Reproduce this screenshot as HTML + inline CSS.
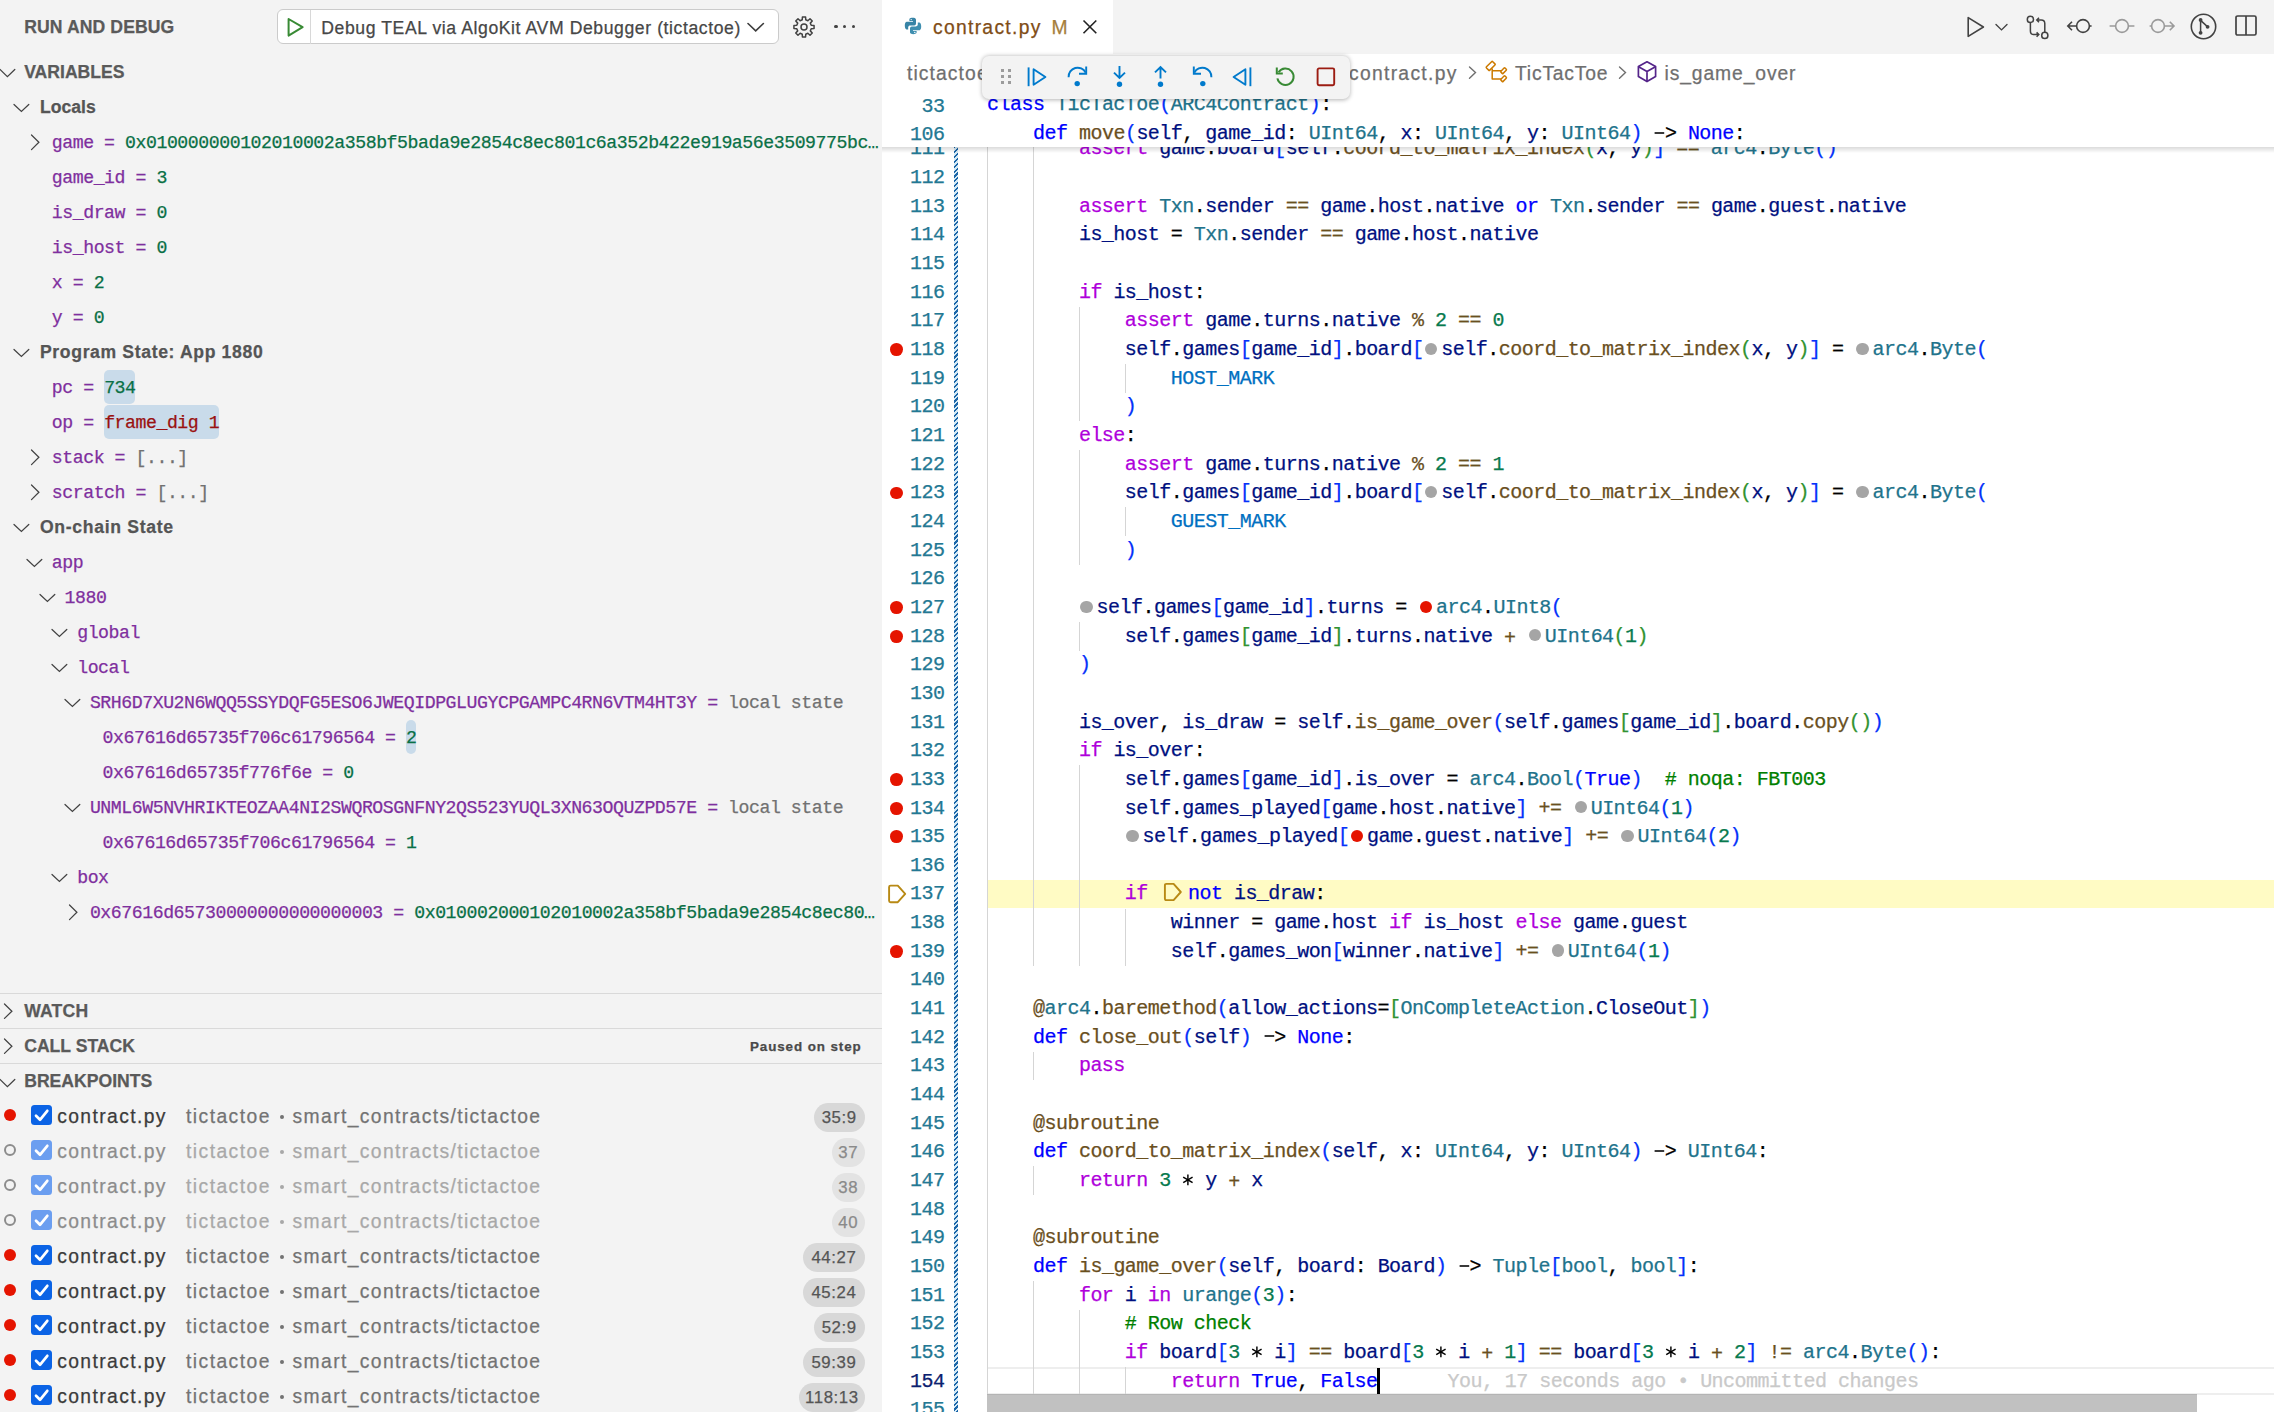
<!DOCTYPE html>
<html><head><meta charset="utf-8"><title>VS Code debug</title>
<style>
*{box-sizing:border-box}
html,body{margin:0;padding:0}
body{width:2274px;height:1412px;overflow:hidden;position:relative;background:#fff;font-family:'Liberation Sans',sans-serif}
.a{position:absolute}
.t{position:absolute;white-space:pre;line-height:30px;height:30px;-webkit-text-stroke:0.25px currentColor}
.kw{color:#AF00DB}.st{color:#0000FF}.fn{color:#6a4f1e}.v{color:#001080}.cl{color:#21738b}.nu{color:#087a4e}
.co{color:#0070C1}.cm{color:#008000}.op{color:#6a4f1e}.pl{color:#000}.b0{color:#0431FA}.b1{color:#319331}.b2{color:#7B3814}
.idot{display:inline-block;width:17.7px;height:1px;position:relative;letter-spacing:0}
.idot::after{content:"";position:absolute;left:1.6px;top:-11.4px;width:12.2px;height:12.2px;border-radius:50%;background:#a5a5a5}
.idot.r::after{background:#e51400}
.star{display:inline-block;width:11.486px;height:1px;position:relative}
.iarr{display:inline-block;width:28.6px;height:1px;position:relative}
</style></head>
<body>
<div class="a" style="left:0;top:0;width:882px;height:1412px;background:#f3f3f3"></div>
<div class="t" style="left:24.20px;top:11.90px;font:bold 17.6px 'Liberation Sans';line-height:30px;color:#5a5a5a;letter-spacing:0.1px">RUN AND DEBUG</div>
<div class="a" style="left:277px;top:8.7px;width:502px;height:35.8px;border:1.7px solid #cbcbcb;border-radius:6px;background:#fff"></div>
<div class="a" style="left:310px;top:9.5px;width:1.4px;height:34.2px;background:#d8d8d8"></div>
<svg class="a" style="left:286px;top:17px;" width="19" height="21" viewBox="0 0 19 21"><path d="M2.6,2 L16.6,10.2 L2.6,18.6 Z" fill="none" stroke="#388a34" stroke-width="2" stroke-linejoin="round"/></svg>
<div class="t" style="left:321.30px;top:12.90px;font:17.6px 'Liberation Sans';line-height:30px;color:#474747;letter-spacing:0.59px">Debug TEAL via AlgoKit AVM Debugger (tictactoe)</div>
<svg class="a" style="left:746px;top:20.9px;" width="19.4" height="12.2" viewBox="0 0 19.4 12.2"><polyline points="2,2.5 9.7,9.899999999999999 17.4,2.5" fill="none" stroke="#3c3c3c" stroke-width="1.6" stroke-linecap="round"/></svg>
<svg class="a" style="left:793px;top:15.5px;" width="22" height="22" viewBox="0 0 22 22"><polygon points="9.40,0.93 12.60,0.93 12.73,3.80 14.87,4.69 17.00,2.75 19.25,5.00 17.31,7.13 18.20,9.27 21.07,9.40 21.07,12.60 18.20,12.73 17.31,14.87 19.25,17.00 17.00,19.25 14.87,17.31 12.73,18.20 12.60,21.07 9.40,21.07 9.27,18.20 7.13,17.31 5.00,19.25 2.75,17.00 4.69,14.87 3.80,12.73 0.93,12.60 0.93,9.40 3.80,9.27 4.69,7.13 2.75,5.00 5.00,2.75 7.13,4.69 9.27,3.80" fill="none" stroke="#424242" stroke-width="1.5" stroke-linejoin="round"/><circle cx="11" cy="11" r="3" fill="none" stroke="#424242" stroke-width="1.5"/></svg>
<div class="a" style="left:834.35px;top:24.8px;width:3.3px;height:3.3px;border-radius:50%;background:#424242"></div>
<div class="a" style="left:843.15px;top:24.8px;width:3.3px;height:3.3px;border-radius:50%;background:#424242"></div>
<div class="a" style="left:851.95px;top:24.8px;width:3.3px;height:3.3px;border-radius:50%;background:#424242"></div>
<svg class="a" style="left:-1.8px;top:66.6px;" width="18.8" height="12.0" viewBox="0 0 18.8 12.0"><polyline points="2,2.5 9.4,9.7 16.8,2.5" fill="none" stroke="#424242" stroke-width="1.25" stroke-linecap="round"/></svg>
<div class="t" style="left:24.20px;top:57.35px;font:bold 17.6px 'Liberation Sans';line-height:30px;color:#5a5a5a;">VARIABLES</div>
<svg class="a" style="left:12.100000000000001px;top:101.75px;" width="18.8" height="11.8" viewBox="0 0 18.8 11.8"><polyline points="2,2.5 9.4,9.5 16.8,2.5" fill="none" stroke="#424242" stroke-width="1.25" stroke-linecap="round"/></svg>
<div class="t" style="left:40.00px;top:92.35px;font:bold 17.6px 'Liberation Sans';line-height:30px;color:#555555;letter-spacing:0.0px">Locals</div>
<svg class="a" style="left:28.799999999999997px;top:132.95px;" width="12.2" height="18.6" viewBox="0 0 12.2 18.6"><polyline points="2.5,2 9.899999999999999,9.3 2.5,16.6" fill="none" stroke="#424242" stroke-width="1.25" stroke-linecap="round"/></svg>
<div class="t" style="left:51.80px;top:128.35px;font:18.2px 'Liberation Mono';line-height:30px;color:#7f2f9e;letter-spacing:-0.452px"><span style="color:#7f2f9e">game</span><span style="color:#7f2f9e"> = </span><span style="color:#0a7046">0x010000000102010002a358bf5bada9e2854c8ec801c6a352b422e919a56e3509775bc…</span></div>
<div class="t" style="left:51.80px;top:163.35px;font:18.2px 'Liberation Mono';line-height:30px;color:#7f2f9e;letter-spacing:-0.452px"><span style="color:#7f2f9e">game_id</span><span style="color:#7f2f9e"> = </span><span style="color:#0a7046">3</span></div>
<div class="t" style="left:51.80px;top:198.35px;font:18.2px 'Liberation Mono';line-height:30px;color:#7f2f9e;letter-spacing:-0.452px"><span style="color:#7f2f9e">is_draw</span><span style="color:#7f2f9e"> = </span><span style="color:#0a7046">0</span></div>
<div class="t" style="left:51.80px;top:233.35px;font:18.2px 'Liberation Mono';line-height:30px;color:#7f2f9e;letter-spacing:-0.452px"><span style="color:#7f2f9e">is_host</span><span style="color:#7f2f9e"> = </span><span style="color:#0a7046">0</span></div>
<div class="t" style="left:51.80px;top:268.35px;font:18.2px 'Liberation Mono';line-height:30px;color:#7f2f9e;letter-spacing:-0.452px"><span style="color:#7f2f9e">x</span><span style="color:#7f2f9e"> = </span><span style="color:#0a7046">2</span></div>
<div class="t" style="left:51.80px;top:303.35px;font:18.2px 'Liberation Mono';line-height:30px;color:#7f2f9e;letter-spacing:-0.452px"><span style="color:#7f2f9e">y</span><span style="color:#7f2f9e"> = </span><span style="color:#0a7046">0</span></div>
<svg class="a" style="left:12.100000000000001px;top:346.75px;" width="18.8" height="11.8" viewBox="0 0 18.8 11.8"><polyline points="2,2.5 9.4,9.5 16.8,2.5" fill="none" stroke="#424242" stroke-width="1.25" stroke-linecap="round"/></svg>
<div class="t" style="left:40.00px;top:337.35px;font:bold 17.6px 'Liberation Sans';line-height:30px;color:#555555;letter-spacing:0.64px">Program State: App 1880</div>
<div class="a" style="left:104.15px;top:370.35px;width:30.61px;height:34px;border-radius:5px;background:#c9dbea"></div>
<div class="t" style="left:51.80px;top:373.35px;font:18.2px 'Liberation Mono';line-height:30px;color:#7f2f9e;letter-spacing:-0.452px"><span style="color:#7f2f9e">pc</span><span style="color:#7f2f9e"> = </span><span style="color:#0a7046">734</span></div>
<div class="a" style="left:104.15px;top:405.35px;width:114.37px;height:34px;border-radius:5px;background:#c9dbea"></div>
<div class="t" style="left:51.80px;top:408.35px;font:18.2px 'Liberation Mono';line-height:30px;color:#7f2f9e;letter-spacing:-0.452px"><span style="color:#7f2f9e">op</span><span style="color:#7f2f9e"> = </span><span style="color:#9a1111">frame_dig 1</span></div>
<svg class="a" style="left:28.799999999999997px;top:447.95000000000005px;" width="12.2" height="18.6" viewBox="0 0 12.2 18.6"><polyline points="2.5,2 9.899999999999999,9.3 2.5,16.6" fill="none" stroke="#424242" stroke-width="1.25" stroke-linecap="round"/></svg>
<div class="t" style="left:51.80px;top:443.35px;font:18.2px 'Liberation Mono';line-height:30px;color:#7f2f9e;letter-spacing:-0.452px"><span style="color:#7f2f9e">stack</span><span style="color:#7f2f9e"> = </span><span style="color:#717171">[...]</span></div>
<svg class="a" style="left:28.799999999999997px;top:482.95000000000005px;" width="12.2" height="18.6" viewBox="0 0 12.2 18.6"><polyline points="2.5,2 9.899999999999999,9.3 2.5,16.6" fill="none" stroke="#424242" stroke-width="1.25" stroke-linecap="round"/></svg>
<div class="t" style="left:51.80px;top:478.35px;font:18.2px 'Liberation Mono';line-height:30px;color:#7f2f9e;letter-spacing:-0.452px"><span style="color:#7f2f9e">scratch</span><span style="color:#7f2f9e"> = </span><span style="color:#717171">[...]</span></div>
<svg class="a" style="left:12.100000000000001px;top:521.75px;" width="18.8" height="11.8" viewBox="0 0 18.8 11.8"><polyline points="2,2.5 9.4,9.5 16.8,2.5" fill="none" stroke="#424242" stroke-width="1.25" stroke-linecap="round"/></svg>
<div class="t" style="left:40.00px;top:512.35px;font:bold 17.6px 'Liberation Sans';line-height:30px;color:#555555;letter-spacing:0.68px">On-chain State</div>
<svg class="a" style="left:24.799999999999997px;top:556.75px;" width="18.8" height="11.8" viewBox="0 0 18.8 11.8"><polyline points="2,2.5 9.4,9.5 16.8,2.5" fill="none" stroke="#424242" stroke-width="1.25" stroke-linecap="round"/></svg>
<div class="t" style="left:51.80px;top:548.35px;font:18.2px 'Liberation Mono';line-height:30px;color:#7f2f9e;letter-spacing:-0.452px"><span style="color:#7f2f9e">app</span></div>
<svg class="a" style="left:37.49999999999999px;top:591.75px;" width="18.8" height="11.8" viewBox="0 0 18.8 11.8"><polyline points="2,2.5 9.4,9.5 16.8,2.5" fill="none" stroke="#424242" stroke-width="1.25" stroke-linecap="round"/></svg>
<div class="t" style="left:64.50px;top:583.35px;font:18.2px 'Liberation Mono';line-height:30px;color:#7f2f9e;letter-spacing:-0.452px"><span style="color:#7f2f9e">1880</span></div>
<svg class="a" style="left:50.199999999999996px;top:626.75px;" width="18.8" height="11.8" viewBox="0 0 18.8 11.8"><polyline points="2,2.5 9.4,9.5 16.8,2.5" fill="none" stroke="#424242" stroke-width="1.25" stroke-linecap="round"/></svg>
<div class="t" style="left:77.20px;top:618.35px;font:18.2px 'Liberation Mono';line-height:30px;color:#7f2f9e;letter-spacing:-0.452px"><span style="color:#7f2f9e">global</span></div>
<svg class="a" style="left:50.199999999999996px;top:661.75px;" width="18.8" height="11.8" viewBox="0 0 18.8 11.8"><polyline points="2,2.5 9.4,9.5 16.8,2.5" fill="none" stroke="#424242" stroke-width="1.25" stroke-linecap="round"/></svg>
<div class="t" style="left:77.20px;top:653.35px;font:18.2px 'Liberation Mono';line-height:30px;color:#7f2f9e;letter-spacing:-0.452px"><span style="color:#7f2f9e">local</span></div>
<svg class="a" style="left:62.900000000000006px;top:696.75px;" width="18.8" height="11.8" viewBox="0 0 18.8 11.8"><polyline points="2,2.5 9.4,9.5 16.8,2.5" fill="none" stroke="#424242" stroke-width="1.25" stroke-linecap="round"/></svg>
<div class="t" style="left:89.90px;top:688.35px;font:18.2px 'Liberation Mono';line-height:30px;color:#7f2f9e;letter-spacing:-0.452px"><span style="color:#7f2f9e">SRH6D7XU2N6WQQ5SSYDQFG5ESO6JWEQIDPGLUGYCPGAMPC4RN6VTM4HT3Y</span><span style="color:#7f2f9e"> = </span><span style="color:#717171">local state</span></div>
<div class="a" style="left:406.23px;top:720.35px;width:9.67px;height:34px;border-radius:5px;background:#c9dbea"></div>
<div class="t" style="left:102.60px;top:723.35px;font:18.2px 'Liberation Mono';line-height:30px;color:#7f2f9e;letter-spacing:-0.452px"><span style="color:#7f2f9e">0x67616d65735f706c61796564</span><span style="color:#7f2f9e"> = </span><span style="color:#0a7046">2</span></div>
<div class="t" style="left:102.60px;top:758.35px;font:18.2px 'Liberation Mono';line-height:30px;color:#7f2f9e;letter-spacing:-0.452px"><span style="color:#7f2f9e">0x67616d65735f776f6e</span><span style="color:#7f2f9e"> = </span><span style="color:#0a7046">0</span></div>
<svg class="a" style="left:62.900000000000006px;top:801.75px;" width="18.8" height="11.8" viewBox="0 0 18.8 11.8"><polyline points="2,2.5 9.4,9.5 16.8,2.5" fill="none" stroke="#424242" stroke-width="1.25" stroke-linecap="round"/></svg>
<div class="t" style="left:89.90px;top:793.35px;font:18.2px 'Liberation Mono';line-height:30px;color:#7f2f9e;letter-spacing:-0.452px"><span style="color:#7f2f9e">UNML6W5NVHRIKTEOZAA4NI2SWQROSGNFNY2QS523YUQL3XN63OQUZPD57E</span><span style="color:#7f2f9e"> = </span><span style="color:#717171">local state</span></div>
<div class="t" style="left:102.60px;top:828.35px;font:18.2px 'Liberation Mono';line-height:30px;color:#7f2f9e;letter-spacing:-0.452px"><span style="color:#7f2f9e">0x67616d65735f706c61796564</span><span style="color:#7f2f9e"> = </span><span style="color:#0a7046">1</span></div>
<svg class="a" style="left:50.199999999999996px;top:871.75px;" width="18.8" height="11.8" viewBox="0 0 18.8 11.8"><polyline points="2,2.5 9.4,9.5 16.8,2.5" fill="none" stroke="#424242" stroke-width="1.25" stroke-linecap="round"/></svg>
<div class="t" style="left:77.20px;top:863.35px;font:18.2px 'Liberation Mono';line-height:30px;color:#7f2f9e;letter-spacing:-0.452px"><span style="color:#7f2f9e">box</span></div>
<svg class="a" style="left:66.9px;top:902.95px;" width="12.2" height="18.6" viewBox="0 0 12.2 18.6"><polyline points="2.5,2 9.899999999999999,9.3 2.5,16.6" fill="none" stroke="#424242" stroke-width="1.25" stroke-linecap="round"/></svg>
<div class="t" style="left:89.90px;top:898.35px;font:18.2px 'Liberation Mono';line-height:30px;color:#7f2f9e;letter-spacing:-0.452px"><span style="color:#7f2f9e">0x67616d65730000000000000003</span><span style="color:#7f2f9e"> = </span><span style="color:#0a7046">0x010002000102010002a358bf5bada9e2854c8ec80…</span></div>
<div class="a" style="left:0;top:992.6px;width:882px;height:1.4px;background:#d9d9d9"></div>
<div class="a" style="left:0;top:1027.6px;width:882px;height:1.4px;background:#d9d9d9"></div>
<div class="a" style="left:0;top:1062.6px;width:882px;height:1.4px;background:#d9d9d9"></div>
<svg class="a" style="left:2.0px;top:1001.8px;" width="12.2" height="18.4" viewBox="0 0 12.2 18.4"><polyline points="2.5,2 9.899999999999999,9.2 2.5,16.4" fill="none" stroke="#424242" stroke-width="1.25" stroke-linecap="round"/></svg>
<div class="t" style="left:24.20px;top:996.30px;font:bold 17.6px 'Liberation Sans';line-height:30px;color:#5a5a5a;letter-spacing:0.2px">WATCH</div>
<svg class="a" style="left:2.0px;top:1036.8px;" width="12.2" height="18.4" viewBox="0 0 12.2 18.4"><polyline points="2.5,2 9.899999999999999,9.2 2.5,16.4" fill="none" stroke="#424242" stroke-width="1.25" stroke-linecap="round"/></svg>
<div class="t" style="left:24.20px;top:1031.30px;font:bold 17.6px 'Liberation Sans';line-height:30px;color:#5a5a5a;">CALL STACK</div>
<div class="t" style="left:750.00px;top:1032.00px;font:bold 13.4px 'Liberation Sans';line-height:30px;color:#4a4a4a;letter-spacing:0.9px">Paused on step</div>
<svg class="a" style="left:-1.8px;top:1076.6px;" width="18.8" height="12.0" viewBox="0 0 18.8 12.0"><polyline points="2,2.5 9.4,9.7 16.8,2.5" fill="none" stroke="#424242" stroke-width="1.25" stroke-linecap="round"/></svg>
<div class="t" style="left:24.20px;top:1066.30px;font:bold 17.6px 'Liberation Sans';line-height:30px;color:#5a5a5a;">BREAKPOINTS</div>
<div class="a" style="left:3.6px;top:1108.70px;width:12.6px;height:12.6px;border-radius:50%;background:#e51400"></div>
<div class="a" style="left:31.2px;top:1104.80px;width:20.6px;height:20.4px;border-radius:3.5px;background:#0b63e5"></div>
<svg class="a" style="left:31.2px;top:1104.8px;" width="21" height="21" viewBox="0 0 21 21"><polyline points="5,10.8 9,14.8 16.3,5.8" fill="none" stroke="#fff" stroke-width="2.7" stroke-linecap="round" stroke-linejoin="round"/></svg>
<div class="t" style="left:57.20px;top:1101.60px;font:19.3px 'Liberation Sans';line-height:30px;color:#3b3b3b;letter-spacing:1.4px">contract.py</div>
<div class="t" style="left:186.00px;top:1101.60px;font:19.3px 'Liberation Sans';line-height:30px;color:#737373;letter-spacing:1.45px">tictactoe</div>
<div class="a" style="left:280.1px;top:1114.80px;width:3.8px;height:3.8px;border-radius:50%;background:#737373"></div>
<div class="t" style="left:292.60px;top:1101.60px;font:19.3px 'Liberation Sans';line-height:30px;color:#737373;letter-spacing:1.38px">smart_contracts/tictactoe</div>
<div class="a" style="left:813.80px;top:1102.80px;width:50.8px;height:28.8px;border-radius:14.4px;background:#d8d8d8"></div>
<div class="t" style="left:813.80px;top:1102.60px;font:16.8px 'Liberation Sans';line-height:30px;color:#555555;width:50.8px;text-align:center;letter-spacing:0.6px">35:9</div>
<div class="a" style="left:3.6px;top:1143.70px;width:12.6px;height:12.6px;border-radius:50%;border:2.2px solid #8c8c8c"></div>
<div class="a" style="left:31.2px;top:1139.80px;width:20.6px;height:20.4px;border-radius:3.5px;background:#6b9ef0"></div>
<svg class="a" style="left:31.2px;top:1139.8px;" width="21" height="21" viewBox="0 0 21 21"><polyline points="5,10.8 9,14.8 16.3,5.8" fill="none" stroke="#fff" stroke-width="2.7" stroke-linecap="round" stroke-linejoin="round"/></svg>
<div class="t" style="left:57.20px;top:1136.60px;font:19.3px 'Liberation Sans';line-height:30px;color:#8c8c8c;letter-spacing:1.4px">contract.py</div>
<div class="t" style="left:186.00px;top:1136.60px;font:19.3px 'Liberation Sans';line-height:30px;color:#a8a8a8;letter-spacing:1.45px">tictactoe</div>
<div class="a" style="left:280.1px;top:1149.80px;width:3.8px;height:3.8px;border-radius:50%;background:#a8a8a8"></div>
<div class="t" style="left:292.60px;top:1136.60px;font:19.3px 'Liberation Sans';line-height:30px;color:#a8a8a8;letter-spacing:1.38px">smart_contracts/tictactoe</div>
<div class="a" style="left:831.80px;top:1137.80px;width:32.8px;height:28.8px;border-radius:14.4px;background:#e3e3e3"></div>
<div class="t" style="left:831.80px;top:1137.60px;font:16.8px 'Liberation Sans';line-height:30px;color:#8a8a8a;width:32.8px;text-align:center;letter-spacing:0.6px">37</div>
<div class="a" style="left:3.6px;top:1178.70px;width:12.6px;height:12.6px;border-radius:50%;border:2.2px solid #8c8c8c"></div>
<div class="a" style="left:31.2px;top:1174.80px;width:20.6px;height:20.4px;border-radius:3.5px;background:#6b9ef0"></div>
<svg class="a" style="left:31.2px;top:1174.8px;" width="21" height="21" viewBox="0 0 21 21"><polyline points="5,10.8 9,14.8 16.3,5.8" fill="none" stroke="#fff" stroke-width="2.7" stroke-linecap="round" stroke-linejoin="round"/></svg>
<div class="t" style="left:57.20px;top:1171.60px;font:19.3px 'Liberation Sans';line-height:30px;color:#8c8c8c;letter-spacing:1.4px">contract.py</div>
<div class="t" style="left:186.00px;top:1171.60px;font:19.3px 'Liberation Sans';line-height:30px;color:#a8a8a8;letter-spacing:1.45px">tictactoe</div>
<div class="a" style="left:280.1px;top:1184.80px;width:3.8px;height:3.8px;border-radius:50%;background:#a8a8a8"></div>
<div class="t" style="left:292.60px;top:1171.60px;font:19.3px 'Liberation Sans';line-height:30px;color:#a8a8a8;letter-spacing:1.38px">smart_contracts/tictactoe</div>
<div class="a" style="left:831.80px;top:1172.80px;width:32.8px;height:28.8px;border-radius:14.4px;background:#e3e3e3"></div>
<div class="t" style="left:831.80px;top:1172.60px;font:16.8px 'Liberation Sans';line-height:30px;color:#8a8a8a;width:32.8px;text-align:center;letter-spacing:0.6px">38</div>
<div class="a" style="left:3.6px;top:1213.70px;width:12.6px;height:12.6px;border-radius:50%;border:2.2px solid #8c8c8c"></div>
<div class="a" style="left:31.2px;top:1209.80px;width:20.6px;height:20.4px;border-radius:3.5px;background:#6b9ef0"></div>
<svg class="a" style="left:31.2px;top:1209.8px;" width="21" height="21" viewBox="0 0 21 21"><polyline points="5,10.8 9,14.8 16.3,5.8" fill="none" stroke="#fff" stroke-width="2.7" stroke-linecap="round" stroke-linejoin="round"/></svg>
<div class="t" style="left:57.20px;top:1206.60px;font:19.3px 'Liberation Sans';line-height:30px;color:#8c8c8c;letter-spacing:1.4px">contract.py</div>
<div class="t" style="left:186.00px;top:1206.60px;font:19.3px 'Liberation Sans';line-height:30px;color:#a8a8a8;letter-spacing:1.45px">tictactoe</div>
<div class="a" style="left:280.1px;top:1219.80px;width:3.8px;height:3.8px;border-radius:50%;background:#a8a8a8"></div>
<div class="t" style="left:292.60px;top:1206.60px;font:19.3px 'Liberation Sans';line-height:30px;color:#a8a8a8;letter-spacing:1.38px">smart_contracts/tictactoe</div>
<div class="a" style="left:831.80px;top:1207.80px;width:32.8px;height:28.8px;border-radius:14.4px;background:#e3e3e3"></div>
<div class="t" style="left:831.80px;top:1207.60px;font:16.8px 'Liberation Sans';line-height:30px;color:#8a8a8a;width:32.8px;text-align:center;letter-spacing:0.6px">40</div>
<div class="a" style="left:3.6px;top:1248.70px;width:12.6px;height:12.6px;border-radius:50%;background:#e51400"></div>
<div class="a" style="left:31.2px;top:1244.80px;width:20.6px;height:20.4px;border-radius:3.5px;background:#0b63e5"></div>
<svg class="a" style="left:31.2px;top:1244.8px;" width="21" height="21" viewBox="0 0 21 21"><polyline points="5,10.8 9,14.8 16.3,5.8" fill="none" stroke="#fff" stroke-width="2.7" stroke-linecap="round" stroke-linejoin="round"/></svg>
<div class="t" style="left:57.20px;top:1241.60px;font:19.3px 'Liberation Sans';line-height:30px;color:#3b3b3b;letter-spacing:1.4px">contract.py</div>
<div class="t" style="left:186.00px;top:1241.60px;font:19.3px 'Liberation Sans';line-height:30px;color:#737373;letter-spacing:1.45px">tictactoe</div>
<div class="a" style="left:280.1px;top:1254.80px;width:3.8px;height:3.8px;border-radius:50%;background:#737373"></div>
<div class="t" style="left:292.60px;top:1241.60px;font:19.3px 'Liberation Sans';line-height:30px;color:#737373;letter-spacing:1.38px">smart_contracts/tictactoe</div>
<div class="a" style="left:803.20px;top:1242.80px;width:61.4px;height:28.8px;border-radius:14.4px;background:#d8d8d8"></div>
<div class="t" style="left:803.20px;top:1242.60px;font:16.8px 'Liberation Sans';line-height:30px;color:#555555;width:61.4px;text-align:center;letter-spacing:0.6px">44:27</div>
<div class="a" style="left:3.6px;top:1283.70px;width:12.6px;height:12.6px;border-radius:50%;background:#e51400"></div>
<div class="a" style="left:31.2px;top:1279.80px;width:20.6px;height:20.4px;border-radius:3.5px;background:#0b63e5"></div>
<svg class="a" style="left:31.2px;top:1279.8px;" width="21" height="21" viewBox="0 0 21 21"><polyline points="5,10.8 9,14.8 16.3,5.8" fill="none" stroke="#fff" stroke-width="2.7" stroke-linecap="round" stroke-linejoin="round"/></svg>
<div class="t" style="left:57.20px;top:1276.60px;font:19.3px 'Liberation Sans';line-height:30px;color:#3b3b3b;letter-spacing:1.4px">contract.py</div>
<div class="t" style="left:186.00px;top:1276.60px;font:19.3px 'Liberation Sans';line-height:30px;color:#737373;letter-spacing:1.45px">tictactoe</div>
<div class="a" style="left:280.1px;top:1289.80px;width:3.8px;height:3.8px;border-radius:50%;background:#737373"></div>
<div class="t" style="left:292.60px;top:1276.60px;font:19.3px 'Liberation Sans';line-height:30px;color:#737373;letter-spacing:1.38px">smart_contracts/tictactoe</div>
<div class="a" style="left:803.20px;top:1277.80px;width:61.4px;height:28.8px;border-radius:14.4px;background:#d8d8d8"></div>
<div class="t" style="left:803.20px;top:1277.60px;font:16.8px 'Liberation Sans';line-height:30px;color:#555555;width:61.4px;text-align:center;letter-spacing:0.6px">45:24</div>
<div class="a" style="left:3.6px;top:1318.70px;width:12.6px;height:12.6px;border-radius:50%;background:#e51400"></div>
<div class="a" style="left:31.2px;top:1314.80px;width:20.6px;height:20.4px;border-radius:3.5px;background:#0b63e5"></div>
<svg class="a" style="left:31.2px;top:1314.8px;" width="21" height="21" viewBox="0 0 21 21"><polyline points="5,10.8 9,14.8 16.3,5.8" fill="none" stroke="#fff" stroke-width="2.7" stroke-linecap="round" stroke-linejoin="round"/></svg>
<div class="t" style="left:57.20px;top:1311.60px;font:19.3px 'Liberation Sans';line-height:30px;color:#3b3b3b;letter-spacing:1.4px">contract.py</div>
<div class="t" style="left:186.00px;top:1311.60px;font:19.3px 'Liberation Sans';line-height:30px;color:#737373;letter-spacing:1.45px">tictactoe</div>
<div class="a" style="left:280.1px;top:1324.80px;width:3.8px;height:3.8px;border-radius:50%;background:#737373"></div>
<div class="t" style="left:292.60px;top:1311.60px;font:19.3px 'Liberation Sans';line-height:30px;color:#737373;letter-spacing:1.38px">smart_contracts/tictactoe</div>
<div class="a" style="left:813.80px;top:1312.80px;width:50.8px;height:28.8px;border-radius:14.4px;background:#d8d8d8"></div>
<div class="t" style="left:813.80px;top:1312.60px;font:16.8px 'Liberation Sans';line-height:30px;color:#555555;width:50.8px;text-align:center;letter-spacing:0.6px">52:9</div>
<div class="a" style="left:3.6px;top:1353.70px;width:12.6px;height:12.6px;border-radius:50%;background:#e51400"></div>
<div class="a" style="left:31.2px;top:1349.80px;width:20.6px;height:20.4px;border-radius:3.5px;background:#0b63e5"></div>
<svg class="a" style="left:31.2px;top:1349.8px;" width="21" height="21" viewBox="0 0 21 21"><polyline points="5,10.8 9,14.8 16.3,5.8" fill="none" stroke="#fff" stroke-width="2.7" stroke-linecap="round" stroke-linejoin="round"/></svg>
<div class="t" style="left:57.20px;top:1346.60px;font:19.3px 'Liberation Sans';line-height:30px;color:#3b3b3b;letter-spacing:1.4px">contract.py</div>
<div class="t" style="left:186.00px;top:1346.60px;font:19.3px 'Liberation Sans';line-height:30px;color:#737373;letter-spacing:1.45px">tictactoe</div>
<div class="a" style="left:280.1px;top:1359.80px;width:3.8px;height:3.8px;border-radius:50%;background:#737373"></div>
<div class="t" style="left:292.60px;top:1346.60px;font:19.3px 'Liberation Sans';line-height:30px;color:#737373;letter-spacing:1.38px">smart_contracts/tictactoe</div>
<div class="a" style="left:803.20px;top:1347.80px;width:61.4px;height:28.8px;border-radius:14.4px;background:#d8d8d8"></div>
<div class="t" style="left:803.20px;top:1347.60px;font:16.8px 'Liberation Sans';line-height:30px;color:#555555;width:61.4px;text-align:center;letter-spacing:0.6px">59:39</div>
<div class="a" style="left:3.6px;top:1388.70px;width:12.6px;height:12.6px;border-radius:50%;background:#e51400"></div>
<div class="a" style="left:31.2px;top:1384.80px;width:20.6px;height:20.4px;border-radius:3.5px;background:#0b63e5"></div>
<svg class="a" style="left:31.2px;top:1384.8px;" width="21" height="21" viewBox="0 0 21 21"><polyline points="5,10.8 9,14.8 16.3,5.8" fill="none" stroke="#fff" stroke-width="2.7" stroke-linecap="round" stroke-linejoin="round"/></svg>
<div class="t" style="left:57.20px;top:1381.60px;font:19.3px 'Liberation Sans';line-height:30px;color:#3b3b3b;letter-spacing:1.4px">contract.py</div>
<div class="t" style="left:186.00px;top:1381.60px;font:19.3px 'Liberation Sans';line-height:30px;color:#737373;letter-spacing:1.45px">tictactoe</div>
<div class="a" style="left:280.1px;top:1394.80px;width:3.8px;height:3.8px;border-radius:50%;background:#737373"></div>
<div class="t" style="left:292.60px;top:1381.60px;font:19.3px 'Liberation Sans';line-height:30px;color:#737373;letter-spacing:1.38px">smart_contracts/tictactoe</div>
<div class="a" style="left:799.20px;top:1382.80px;width:65.4px;height:28.8px;border-radius:14.4px;background:#d8d8d8"></div>
<div class="t" style="left:799.20px;top:1382.60px;font:16.8px 'Liberation Sans';line-height:30px;color:#555555;width:65.4px;text-align:center;letter-spacing:0.6px">118:13</div>
<div class="a" style="left:882px;top:0;width:1392px;height:54.2px;background:#f3f3f3"></div>
<div class="a" style="left:882px;top:0;width:231px;height:54.2px;background:#fff"></div>
<svg class="a" style="left:904px;top:17.4px;" width="18" height="18" viewBox="0 0 18 18">
<path d="M8.8,0.8 C5.2,0.8 5.4,2.4 5.4,2.4 L5.4,4.1 L9,4.1 L9,4.7 L3.2,4.7 C3.2,4.7 0.8,4.4 0.8,8.6 C0.8,12.7 2.9,12.6 2.9,12.6 L4.2,12.6 L4.2,10.7 C4.2,10.7 4.1,8.5 6.3,8.5 L9.9,8.5 C9.9,8.5 12,8.5 12,6.5 L12,3 C12,3 12.3,0.8 8.8,0.8 Z" fill="#3784a6"/>
<path d="M9.2,17.2 C12.8,17.2 12.6,15.6 12.6,15.6 L12.6,13.9 L9,13.9 L9,13.3 L14.8,13.3 C14.8,13.3 17.2,13.6 17.2,9.4 C17.2,5.3 15.1,5.4 15.1,5.4 L13.8,5.4 L13.8,7.3 C13.8,7.3 13.9,9.5 11.7,9.5 L8.1,9.5 C8.1,9.5 6,9.5 6,11.5 L6,15 C6,15 5.7,17.2 9.2,17.2 Z" fill="#3f8fb0"/>
<circle cx="7.2" cy="2.6" r="0.7" fill="#fff"/><circle cx="10.8" cy="15.4" r="0.7" fill="#fff"/></svg>
<div class="t" style="left:933.00px;top:13.00px;font:19.3px 'Liberation Sans';line-height:30px;color:#7f4d16;letter-spacing:1.3px">contract.py</div>
<div class="t" style="left:1051.50px;top:12.80px;font:19.3px 'Liberation Sans';line-height:30px;color:#a67e3c;letter-spacing:0px">M</div>
<svg class="a" style="left:1082px;top:19px;" width="16" height="16" viewBox="0 0 16 16"><path d="M1.5,1.5 L14.3,14.3 M14.3,1.5 L1.5,14.3" stroke="#222" stroke-width="1.6" fill="none"/></svg>
<svg class="a" style="left:1966px;top:16px;" width="20" height="22" viewBox="0 0 20 22"><path d="M2.2,1.6 L17.4,11 L2.2,20.4 Z" fill="none" stroke="#424242" stroke-width="1.6" stroke-linejoin="round"/></svg>
<svg class="a" style="left:1993.8px;top:21.6px;" width="15" height="10.2" viewBox="0 0 15 10.2"><polyline points="2,2.5 7.5,7.8999999999999995 13,2.5" fill="none" stroke="#424242" stroke-width="1.4" stroke-linecap="round"/></svg>
<svg class="a" style="left:2025px;top:14px;" width="26" height="27" viewBox="0 0 26 27"><circle cx="5.4" cy="5.4" r="3.1" fill="none" stroke="#424242" stroke-width="1.5"/>
<circle cx="19.8" cy="21.4" r="3.1" fill="none" stroke="#424242" stroke-width="1.5"/>
<path d="M5.4,8.5 L5.4,17 Q5.4,20.6 9,20.6 L13.5,20.6 M11.6,18.4 L13.8,20.6 L11.6,22.8" fill="none" stroke="#424242" stroke-width="1.5"/>
<path d="M19.8,18.3 L19.8,9.6 Q19.8,6 16.2,6 L12,6 M14,3.8 L11.8,6 L14,8.2" fill="none" stroke="#424242" stroke-width="1.5"/></svg>
<svg class="a" style="left:2066px;top:16px;" width="27" height="20" viewBox="0 0 27 20"><circle cx="17" cy="10" r="6.4" fill="none" stroke="#424242" stroke-width="1.6"/><path d="M10.6,10 L1.8,10 M6,5.8 L1.8,10 L6,14.2 M23.4,10 L25.6,10" fill="none" stroke="#424242" stroke-width="1.6"/></svg>
<svg class="a" style="left:2109px;top:16px;" width="26" height="20" viewBox="0 0 26 20"><circle cx="13" cy="10" r="6.4" fill="none" stroke="#9a9a9a" stroke-width="1.6"/><path d="M0.6,10 L6.6,10 M19.4,10 L25.4,10" fill="none" stroke="#9a9a9a" stroke-width="1.6"/></svg>
<svg class="a" style="left:2149px;top:16px;" width="27" height="20" viewBox="0 0 27 20"><circle cx="9" cy="10" r="6.4" fill="none" stroke="#9a9a9a" stroke-width="1.6"/><path d="M0.6,10 L2.6,10 M15.4,10 L25,10 M20.8,5.8 L25,10 L20.8,14.2" fill="none" stroke="#9a9a9a" stroke-width="1.6"/></svg>
<svg class="a" style="left:2190px;top:13px;" width="27" height="27" viewBox="0 0 27 27"><circle cx="13.5" cy="13.5" r="12.2" fill="none" stroke="#424242" stroke-width="1.6"/><path d="M10.6,6.8 L10.6,19.6 M10.6,7.4 L17.4,13.6" fill="none" stroke="#424242" stroke-width="1.5"/><circle cx="10.6" cy="6.9" r="1.9" fill="#424242"/><circle cx="17.6" cy="13.8" r="1.9" fill="#424242"/><circle cx="10.6" cy="19.8" r="1.9" fill="#424242"/></svg>
<svg class="a" style="left:2235px;top:15px;" width="22" height="21" viewBox="0 0 22 21"><rect x="1" y="1" width="20" height="19" rx="1.6" fill="none" stroke="#424242" stroke-width="1.7"/><path d="M11,1 L11,20" stroke="#424242" stroke-width="1.7"/></svg>
<div class="t" style="left:907.00px;top:58.60px;font:19.3px 'Liberation Sans';line-height:30px;color:#6f6f6f;letter-spacing:1.1px">tictactoe</div>
<div class="t" style="left:1349.00px;top:58.60px;font:19.3px 'Liberation Sans';line-height:30px;color:#6f6f6f;letter-spacing:1.3px">contract.py</div>
<svg class="a" style="left:1467px;top:65.2px;" width="10.8" height="15.2" viewBox="0 0 10.8 15.2"><polyline points="2.5,2 8.5,7.6 2.5,13.2" fill="none" stroke="#6f6f6f" stroke-width="1.4" stroke-linecap="round"/></svg>
<svg class="a" style="left:1480px;top:56px;" width="40" height="32" viewBox="0 0 40 32"><g fill="none" stroke="#cc7a00" stroke-width="1.5" stroke-linejoin="round"><rect x="6.25" y="7.55" width="8.9" height="4.7" rx="0.8" transform="rotate(-45 10.7 9.9)"/><rect x="20.7" y="13.15" width="5.8" height="3.1" rx="0.7" transform="rotate(-45 23.6 14.7)"/><rect x="20.7" y="21.15" width="5.8" height="3.1" rx="0.7" transform="rotate(-45 23.6 22.7)"/><path d="M12.2,12.4 L12.2,22.9 L21,22.9 M12.2,14.7 L21,14.7"/></g></svg>
<div class="t" style="left:1515.00px;top:58.60px;font:19.3px 'Liberation Sans';line-height:30px;color:#6f6f6f;letter-spacing:0.8px">TicTacToe</div>
<svg class="a" style="left:1617px;top:65.2px;" width="10.8" height="15.2" viewBox="0 0 10.8 15.2"><polyline points="2.5,2 8.5,7.6 2.5,13.2" fill="none" stroke="#6f6f6f" stroke-width="1.4" stroke-linecap="round"/></svg>
<svg class="a" style="left:1636px;top:60px;" width="22" height="24" viewBox="0 0 22 24"><g fill="none" stroke="#55258a" stroke-width="1.7" stroke-linejoin="round"><path d="M11,1.8 L19.6,6.6 L19.6,16.6 L11,21.6 L2.4,16.6 L2.4,6.6 Z"/><path d="M2.6,6.8 L11,11.6 L19.4,6.8 M11,11.6 L11,21.4"/></g></svg>
<div class="t" style="left:1664.50px;top:58.60px;font:19.3px 'Liberation Sans';line-height:30px;color:#6f6f6f;letter-spacing:0.9px">is_game_over</div>
<div class="a" style="left:882px;top:89px;width:1392px;height:1323px;overflow:hidden" id="ed">
<div class="a" style="left:105.0px;top:1278.01px;width:1287.0px;height:28.2px;border-top:2.4px solid #eeeeee;border-bottom:2.4px solid #eeeeee"></div>
<div class="a" style="left:105.0px;top:791.17px;width:1287.0px;height:27.6px;background:#fffbc4"></div>
<div class="a" style="left:104.80px;top:45.84px;width:1.6px;height:1289.48px;background:#d5d5d5"></div>
<div class="a" style="left:150.74px;top:45.84px;width:1.6px;height:831.00px;background:#d5d5d5"></div>
<div class="a" style="left:196.69px;top:217.77px;width:1.6px;height:114.62px;background:#d5d5d5"></div>
<div class="a" style="left:242.63px;top:275.09px;width:1.6px;height:28.65px;background:#d5d5d5"></div>
<div class="a" style="left:196.69px;top:361.05px;width:1.6px;height:114.62px;background:#d5d5d5"></div>
<div class="a" style="left:242.63px;top:418.36px;width:1.6px;height:28.65px;background:#d5d5d5"></div>
<div class="a" style="left:196.69px;top:532.98px;width:1.6px;height:28.65px;background:#d5d5d5"></div>
<div class="a" style="left:196.69px;top:676.25px;width:1.6px;height:200.59px;background:#d5d5d5"></div>
<div class="a" style="left:242.63px;top:819.53px;width:1.6px;height:57.31px;background:#d5d5d5"></div>
<div class="a" style="left:150.74px;top:962.81px;width:1.6px;height:28.65px;background:#d5d5d5"></div>
<div class="a" style="left:150.74px;top:1077.43px;width:1.6px;height:28.65px;background:#d5d5d5"></div>
<div class="a" style="left:150.74px;top:1192.05px;width:1.6px;height:143.28px;background:#d5d5d5"></div>
<div class="a" style="left:196.69px;top:1220.70px;width:1.6px;height:114.62px;background:#d5d5d5"></div>
<div class="a" style="left:242.63px;top:1278.01px;width:1.6px;height:57.31px;background:#d5d5d5"></div>
<div class="a" style="left:71.60000000000002px;top:0;width:4.6px;height:1323px;background:repeating-linear-gradient(-45deg,#1b65a8 0 1.5px,#d3e9f5 1.5px 3.46px)"></div>
<div class="t" style="left:0.00px;top:45.44px;font:20.0px 'Liberation Mono';line-height:30px;color:#237893;width:62.5px;text-align:right;letter-spacing:-0.516px">111</div>
<div class="t" style="left:105.00px;top:45.44px;font:20.0px 'Liberation Mono';line-height:30px;color:#001080;letter-spacing:-0.516px"><span class="pl">        </span><span class="kw">assert</span><span class="pl"> </span><span class="v">game</span><span class="pl">.</span><span class="v">board</span><span class="b0">[</span><span class="v">self</span><span class="pl">.</span><span class="fn">coord_to_matrix_index</span><span class="b1">(</span><span class="v">x</span><span class="pl">, </span><span class="v">y</span><span class="b1">)</span><span class="b0">]</span><span class="pl"> </span><span class="op">==</span><span class="pl"> </span><span class="cl">arc4</span><span class="pl">.</span><span class="cl">Byte</span><span class="b0">()</span></div>
<div class="t" style="left:0.00px;top:74.10px;font:20.0px 'Liberation Mono';line-height:30px;color:#237893;width:62.5px;text-align:right;letter-spacing:-0.516px">112</div>
<div class="t" style="left:0.00px;top:102.75px;font:20.0px 'Liberation Mono';line-height:30px;color:#237893;width:62.5px;text-align:right;letter-spacing:-0.516px">113</div>
<div class="t" style="left:105.00px;top:102.75px;font:20.0px 'Liberation Mono';line-height:30px;color:#001080;letter-spacing:-0.516px"><span class="pl">        </span><span class="kw">assert</span><span class="pl"> </span><span class="cl">Txn</span><span class="pl">.</span><span class="v">sender</span><span class="pl"> </span><span class="op">==</span><span class="pl"> </span><span class="v">game</span><span class="pl">.</span><span class="v">host</span><span class="pl">.</span><span class="v">native</span><span class="pl"> </span><span class="st">or</span><span class="pl"> </span><span class="cl">Txn</span><span class="pl">.</span><span class="v">sender</span><span class="pl"> </span><span class="op">==</span><span class="pl"> </span><span class="v">game</span><span class="pl">.</span><span class="v">guest</span><span class="pl">.</span><span class="v">native</span></div>
<div class="t" style="left:0.00px;top:131.41px;font:20.0px 'Liberation Mono';line-height:30px;color:#237893;width:62.5px;text-align:right;letter-spacing:-0.516px">114</div>
<div class="t" style="left:105.00px;top:131.41px;font:20.0px 'Liberation Mono';line-height:30px;color:#001080;letter-spacing:-0.516px"><span class="pl">        </span><span class="v">is_host</span><span class="pl"> = </span><span class="cl">Txn</span><span class="pl">.</span><span class="v">sender</span><span class="pl"> </span><span class="op">==</span><span class="pl"> </span><span class="v">game</span><span class="pl">.</span><span class="v">host</span><span class="pl">.</span><span class="v">native</span></div>
<div class="t" style="left:0.00px;top:160.06px;font:20.0px 'Liberation Mono';line-height:30px;color:#237893;width:62.5px;text-align:right;letter-spacing:-0.516px">115</div>
<div class="t" style="left:0.00px;top:188.72px;font:20.0px 'Liberation Mono';line-height:30px;color:#237893;width:62.5px;text-align:right;letter-spacing:-0.516px">116</div>
<div class="t" style="left:105.00px;top:188.72px;font:20.0px 'Liberation Mono';line-height:30px;color:#001080;letter-spacing:-0.516px"><span class="pl">        </span><span class="kw">if</span><span class="pl"> </span><span class="v">is_host</span><span class="pl">:</span></div>
<div class="t" style="left:0.00px;top:217.38px;font:20.0px 'Liberation Mono';line-height:30px;color:#237893;width:62.5px;text-align:right;letter-spacing:-0.516px">117</div>
<div class="t" style="left:105.00px;top:217.38px;font:20.0px 'Liberation Mono';line-height:30px;color:#001080;letter-spacing:-0.516px"><span class="pl">            </span><span class="kw">assert</span><span class="pl"> </span><span class="v">game</span><span class="pl">.</span><span class="v">turns</span><span class="pl">.</span><span class="v">native</span><span class="pl"> </span><span class="op">%</span><span class="pl"> </span><span class="nu">2</span><span class="pl"> </span><span class="op">==</span><span class="pl"> </span><span class="nu">0</span></div>
<div class="t" style="left:0.00px;top:246.03px;font:20.0px 'Liberation Mono';line-height:30px;color:#237893;width:62.5px;text-align:right;letter-spacing:-0.516px">118</div>
<div class="t" style="left:105.00px;top:246.03px;font:20.0px 'Liberation Mono';line-height:30px;color:#001080;letter-spacing:-0.516px"><span class="pl">            </span><span class="v">self</span><span class="pl">.</span><span class="v">games</span><span class="b0">[</span><span class="v">game_id</span><span class="b0">]</span><span class="pl">.</span><span class="v">board</span><span class="b0">[</span><span class="idot"></span><span class="v">self</span><span class="pl">.</span><span class="fn">coord_to_matrix_index</span><span class="b1">(</span><span class="v">x</span><span class="pl">, </span><span class="v">y</span><span class="b1">)</span><span class="b0">]</span><span class="pl"> = </span><span class="idot"></span><span class="cl">arc4</span><span class="pl">.</span><span class="cl">Byte</span><span class="b0">(</span></div>
<div class="t" style="left:0.00px;top:274.69px;font:20.0px 'Liberation Mono';line-height:30px;color:#237893;width:62.5px;text-align:right;letter-spacing:-0.516px">119</div>
<div class="t" style="left:105.00px;top:274.69px;font:20.0px 'Liberation Mono';line-height:30px;color:#001080;letter-spacing:-0.516px"><span class="pl">                </span><span class="co">HOST_MARK</span></div>
<div class="t" style="left:0.00px;top:303.34px;font:20.0px 'Liberation Mono';line-height:30px;color:#237893;width:62.5px;text-align:right;letter-spacing:-0.516px">120</div>
<div class="t" style="left:105.00px;top:303.34px;font:20.0px 'Liberation Mono';line-height:30px;color:#001080;letter-spacing:-0.516px"><span class="pl">            </span><span class="b0">)</span></div>
<div class="t" style="left:0.00px;top:332.00px;font:20.0px 'Liberation Mono';line-height:30px;color:#237893;width:62.5px;text-align:right;letter-spacing:-0.516px">121</div>
<div class="t" style="left:105.00px;top:332.00px;font:20.0px 'Liberation Mono';line-height:30px;color:#001080;letter-spacing:-0.516px"><span class="pl">        </span><span class="kw">else</span><span class="pl">:</span></div>
<div class="t" style="left:0.00px;top:360.65px;font:20.0px 'Liberation Mono';line-height:30px;color:#237893;width:62.5px;text-align:right;letter-spacing:-0.516px">122</div>
<div class="t" style="left:105.00px;top:360.65px;font:20.0px 'Liberation Mono';line-height:30px;color:#001080;letter-spacing:-0.516px"><span class="pl">            </span><span class="kw">assert</span><span class="pl"> </span><span class="v">game</span><span class="pl">.</span><span class="v">turns</span><span class="pl">.</span><span class="v">native</span><span class="pl"> </span><span class="op">%</span><span class="pl"> </span><span class="nu">2</span><span class="pl"> </span><span class="op">==</span><span class="pl"> </span><span class="nu">1</span></div>
<div class="t" style="left:0.00px;top:389.31px;font:20.0px 'Liberation Mono';line-height:30px;color:#237893;width:62.5px;text-align:right;letter-spacing:-0.516px">123</div>
<div class="t" style="left:105.00px;top:389.31px;font:20.0px 'Liberation Mono';line-height:30px;color:#001080;letter-spacing:-0.516px"><span class="pl">            </span><span class="v">self</span><span class="pl">.</span><span class="v">games</span><span class="b0">[</span><span class="v">game_id</span><span class="b0">]</span><span class="pl">.</span><span class="v">board</span><span class="b0">[</span><span class="idot"></span><span class="v">self</span><span class="pl">.</span><span class="fn">coord_to_matrix_index</span><span class="b1">(</span><span class="v">x</span><span class="pl">, </span><span class="v">y</span><span class="b1">)</span><span class="b0">]</span><span class="pl"> = </span><span class="idot"></span><span class="cl">arc4</span><span class="pl">.</span><span class="cl">Byte</span><span class="b0">(</span></div>
<div class="t" style="left:0.00px;top:417.96px;font:20.0px 'Liberation Mono';line-height:30px;color:#237893;width:62.5px;text-align:right;letter-spacing:-0.516px">124</div>
<div class="t" style="left:105.00px;top:417.96px;font:20.0px 'Liberation Mono';line-height:30px;color:#001080;letter-spacing:-0.516px"><span class="pl">                </span><span class="co">GUEST_MARK</span></div>
<div class="t" style="left:0.00px;top:446.62px;font:20.0px 'Liberation Mono';line-height:30px;color:#237893;width:62.5px;text-align:right;letter-spacing:-0.516px">125</div>
<div class="t" style="left:105.00px;top:446.62px;font:20.0px 'Liberation Mono';line-height:30px;color:#001080;letter-spacing:-0.516px"><span class="pl">            </span><span class="b0">)</span></div>
<div class="t" style="left:0.00px;top:475.27px;font:20.0px 'Liberation Mono';line-height:30px;color:#237893;width:62.5px;text-align:right;letter-spacing:-0.516px">126</div>
<div class="t" style="left:0.00px;top:503.93px;font:20.0px 'Liberation Mono';line-height:30px;color:#237893;width:62.5px;text-align:right;letter-spacing:-0.516px">127</div>
<div class="t" style="left:105.00px;top:503.93px;font:20.0px 'Liberation Mono';line-height:30px;color:#001080;letter-spacing:-0.516px"><span class="pl">        </span><span class="idot"></span><span class="v">self</span><span class="pl">.</span><span class="v">games</span><span class="b0">[</span><span class="v">game_id</span><span class="b0">]</span><span class="pl">.</span><span class="v">turns</span><span class="pl"> = </span><span class="idot r"></span><span class="cl">arc4</span><span class="pl">.</span><span class="cl">UInt8</span><span class="b0">(</span></div>
<div class="t" style="left:0.00px;top:532.58px;font:20.0px 'Liberation Mono';line-height:30px;color:#237893;width:62.5px;text-align:right;letter-spacing:-0.516px">128</div>
<div class="t" style="left:105.00px;top:532.58px;font:20.0px 'Liberation Mono';line-height:30px;color:#001080;letter-spacing:-0.516px"><span class="pl">            </span><span class="v">self</span><span class="pl">.</span><span class="v">games</span><span class="b1">[</span><span class="v">game_id</span><span class="b1">]</span><span class="pl">.</span><span class="v">turns</span><span class="pl">.</span><span class="v">native</span><span class="pl"> </span><span class="op" style="position:relative;top:2px">+</span><span class="pl"> </span><span class="idot"></span><span class="cl">UInt64</span><span class="b1">(</span><span class="nu">1</span><span class="b1">)</span></div>
<div class="t" style="left:0.00px;top:561.24px;font:20.0px 'Liberation Mono';line-height:30px;color:#237893;width:62.5px;text-align:right;letter-spacing:-0.516px">129</div>
<div class="t" style="left:105.00px;top:561.24px;font:20.0px 'Liberation Mono';line-height:30px;color:#001080;letter-spacing:-0.516px"><span class="pl">        </span><span class="b0">)</span></div>
<div class="t" style="left:0.00px;top:589.89px;font:20.0px 'Liberation Mono';line-height:30px;color:#237893;width:62.5px;text-align:right;letter-spacing:-0.516px">130</div>
<div class="t" style="left:0.00px;top:618.55px;font:20.0px 'Liberation Mono';line-height:30px;color:#237893;width:62.5px;text-align:right;letter-spacing:-0.516px">131</div>
<div class="t" style="left:105.00px;top:618.55px;font:20.0px 'Liberation Mono';line-height:30px;color:#001080;letter-spacing:-0.516px"><span class="pl">        </span><span class="v">is_over</span><span class="pl">, </span><span class="v">is_draw</span><span class="pl"> = </span><span class="v">self</span><span class="pl">.</span><span class="fn">is_game_over</span><span class="b0">(</span><span class="v">self</span><span class="pl">.</span><span class="v">games</span><span class="b1">[</span><span class="v">game_id</span><span class="b1">]</span><span class="pl">.</span><span class="v">board</span><span class="pl">.</span><span class="fn">copy</span><span class="b1">()</span><span class="b0">)</span></div>
<div class="t" style="left:0.00px;top:647.20px;font:20.0px 'Liberation Mono';line-height:30px;color:#237893;width:62.5px;text-align:right;letter-spacing:-0.516px">132</div>
<div class="t" style="left:105.00px;top:647.20px;font:20.0px 'Liberation Mono';line-height:30px;color:#001080;letter-spacing:-0.516px"><span class="pl">        </span><span class="kw">if</span><span class="pl"> </span><span class="v">is_over</span><span class="pl">:</span></div>
<div class="t" style="left:0.00px;top:675.86px;font:20.0px 'Liberation Mono';line-height:30px;color:#237893;width:62.5px;text-align:right;letter-spacing:-0.516px">133</div>
<div class="t" style="left:105.00px;top:675.86px;font:20.0px 'Liberation Mono';line-height:30px;color:#001080;letter-spacing:-0.516px"><span class="pl">            </span><span class="v">self</span><span class="pl">.</span><span class="v">games</span><span class="b0">[</span><span class="v">game_id</span><span class="b0">]</span><span class="pl">.</span><span class="v">is_over</span><span class="pl"> = </span><span class="cl">arc4</span><span class="pl">.</span><span class="cl">Bool</span><span class="b0">(</span><span class="st">True</span><span class="b0">)</span><span class="pl">  </span><span class="cm"># noqa: FBT003</span></div>
<div class="t" style="left:0.00px;top:704.51px;font:20.0px 'Liberation Mono';line-height:30px;color:#237893;width:62.5px;text-align:right;letter-spacing:-0.516px">134</div>
<div class="t" style="left:105.00px;top:704.51px;font:20.0px 'Liberation Mono';line-height:30px;color:#001080;letter-spacing:-0.516px"><span class="pl">            </span><span class="v">self</span><span class="pl">.</span><span class="v">games_played</span><span class="b0">[</span><span class="v">game</span><span class="pl">.</span><span class="v">host</span><span class="pl">.</span><span class="v">native</span><span class="b0">]</span><span class="pl"> </span><span class="op">+=</span><span class="pl"> </span><span class="idot"></span><span class="cl">UInt64</span><span class="b0">(</span><span class="nu">1</span><span class="b0">)</span></div>
<div class="t" style="left:0.00px;top:733.17px;font:20.0px 'Liberation Mono';line-height:30px;color:#237893;width:62.5px;text-align:right;letter-spacing:-0.516px">135</div>
<div class="t" style="left:105.00px;top:733.17px;font:20.0px 'Liberation Mono';line-height:30px;color:#001080;letter-spacing:-0.516px"><span class="pl">            </span><span class="idot"></span><span class="v">self</span><span class="pl">.</span><span class="v">games_played</span><span class="b0">[</span><span class="idot r"></span><span class="v">game</span><span class="pl">.</span><span class="v">guest</span><span class="pl">.</span><span class="v">native</span><span class="b0">]</span><span class="pl"> </span><span class="op">+=</span><span class="pl"> </span><span class="idot"></span><span class="cl">UInt64</span><span class="b0">(</span><span class="nu">2</span><span class="b0">)</span></div>
<div class="t" style="left:0.00px;top:761.82px;font:20.0px 'Liberation Mono';line-height:30px;color:#237893;width:62.5px;text-align:right;letter-spacing:-0.516px">136</div>
<div class="t" style="left:0.00px;top:790.48px;font:20.0px 'Liberation Mono';line-height:30px;color:#237893;width:62.5px;text-align:right;letter-spacing:-0.516px">137</div>
<div class="t" style="left:105.00px;top:790.48px;font:20.0px 'Liberation Mono';line-height:30px;color:#001080;letter-spacing:-0.516px"><span class="pl">            </span><span class="kw">if</span><span class="pl"> </span><span class="iarr"><svg width="20" height="20" viewBox="0 0 20 20" style="position:absolute;left:3.8px;top:-16.3px"><path d="M3.4,1.9 L10.6,1.9 L17.8,10 L10.6,18.1 L3.4,18.1 Q1.9,18.1 1.9,16.6 L1.9,3.4 Q1.9,1.9 3.4,1.9 Z" fill="none" stroke="#b88914" stroke-width="1.9" stroke-linejoin="round"/></svg></span><span class="st">not</span><span class="pl"> </span><span class="v">is_draw</span><span class="pl">:</span></div>
<div class="t" style="left:0.00px;top:819.13px;font:20.0px 'Liberation Mono';line-height:30px;color:#237893;width:62.5px;text-align:right;letter-spacing:-0.516px">138</div>
<div class="t" style="left:105.00px;top:819.13px;font:20.0px 'Liberation Mono';line-height:30px;color:#001080;letter-spacing:-0.516px"><span class="pl">                </span><span class="v">winner</span><span class="pl"> = </span><span class="v">game</span><span class="pl">.</span><span class="v">host</span><span class="pl"> </span><span class="kw">if</span><span class="pl"> </span><span class="v">is_host</span><span class="pl"> </span><span class="kw">else</span><span class="pl"> </span><span class="v">game</span><span class="pl">.</span><span class="v">guest</span></div>
<div class="t" style="left:0.00px;top:847.79px;font:20.0px 'Liberation Mono';line-height:30px;color:#237893;width:62.5px;text-align:right;letter-spacing:-0.516px">139</div>
<div class="t" style="left:105.00px;top:847.79px;font:20.0px 'Liberation Mono';line-height:30px;color:#001080;letter-spacing:-0.516px"><span class="pl">                </span><span class="v">self</span><span class="pl">.</span><span class="v">games_won</span><span class="b0">[</span><span class="v">winner</span><span class="pl">.</span><span class="v">native</span><span class="b0">]</span><span class="pl"> </span><span class="op">+=</span><span class="pl"> </span><span class="idot"></span><span class="cl">UInt64</span><span class="b0">(</span><span class="nu">1</span><span class="b0">)</span></div>
<div class="t" style="left:0.00px;top:876.44px;font:20.0px 'Liberation Mono';line-height:30px;color:#237893;width:62.5px;text-align:right;letter-spacing:-0.516px">140</div>
<div class="t" style="left:0.00px;top:905.10px;font:20.0px 'Liberation Mono';line-height:30px;color:#237893;width:62.5px;text-align:right;letter-spacing:-0.516px">141</div>
<div class="t" style="left:105.00px;top:905.10px;font:20.0px 'Liberation Mono';line-height:30px;color:#001080;letter-spacing:-0.516px"><span class="pl">    </span><span class="fn">@</span><span class="cl">arc4</span><span class="pl">.</span><span class="fn">baremethod</span><span class="b0">(</span><span class="v">allow_actions</span><span class="pl">=</span><span class="b1">[</span><span class="cl">OnCompleteAction</span><span class="pl">.</span><span class="v">CloseOut</span><span class="b1">]</span><span class="b0">)</span></div>
<div class="t" style="left:0.00px;top:933.75px;font:20.0px 'Liberation Mono';line-height:30px;color:#237893;width:62.5px;text-align:right;letter-spacing:-0.516px">142</div>
<div class="t" style="left:105.00px;top:933.75px;font:20.0px 'Liberation Mono';line-height:30px;color:#001080;letter-spacing:-0.516px"><span class="pl">    </span><span class="st">def</span><span class="pl"> </span><span class="fn">close_out</span><span class="b0">(</span><span class="v">self</span><span class="b0">)</span><span class="pl"> </span><span class="star"><svg width="12" height="4" viewBox="0 0 12 4" style="position:absolute;left:0px;top:-7.3px"><path d="M1.6,2 L11.2,2" stroke="#000" stroke-width="1.55"/></svg></span><span class="pl">&gt; </span><span class="st">None</span><span class="pl">:</span></div>
<div class="t" style="left:0.00px;top:962.40px;font:20.0px 'Liberation Mono';line-height:30px;color:#237893;width:62.5px;text-align:right;letter-spacing:-0.516px">143</div>
<div class="t" style="left:105.00px;top:962.40px;font:20.0px 'Liberation Mono';line-height:30px;color:#001080;letter-spacing:-0.516px"><span class="pl">        </span><span class="kw">pass</span></div>
<div class="t" style="left:0.00px;top:991.06px;font:20.0px 'Liberation Mono';line-height:30px;color:#237893;width:62.5px;text-align:right;letter-spacing:-0.516px">144</div>
<div class="t" style="left:0.00px;top:1019.71px;font:20.0px 'Liberation Mono';line-height:30px;color:#237893;width:62.5px;text-align:right;letter-spacing:-0.516px">145</div>
<div class="t" style="left:105.00px;top:1019.71px;font:20.0px 'Liberation Mono';line-height:30px;color:#001080;letter-spacing:-0.516px"><span class="pl">    </span><span class="fn">@subroutine</span></div>
<div class="t" style="left:0.00px;top:1048.37px;font:20.0px 'Liberation Mono';line-height:30px;color:#237893;width:62.5px;text-align:right;letter-spacing:-0.516px">146</div>
<div class="t" style="left:105.00px;top:1048.37px;font:20.0px 'Liberation Mono';line-height:30px;color:#001080;letter-spacing:-0.516px"><span class="pl">    </span><span class="st">def</span><span class="pl"> </span><span class="fn">coord_to_matrix_index</span><span class="b0">(</span><span class="v">self</span><span class="pl">, </span><span class="v">x</span><span class="pl">: </span><span class="cl">UInt64</span><span class="pl">, </span><span class="v">y</span><span class="pl">: </span><span class="cl">UInt64</span><span class="b0">)</span><span class="pl"> </span><span class="star"><svg width="12" height="4" viewBox="0 0 12 4" style="position:absolute;left:0px;top:-7.3px"><path d="M1.6,2 L11.2,2" stroke="#000" stroke-width="1.55"/></svg></span><span class="pl">&gt; </span><span class="cl">UInt64</span><span class="pl">:</span></div>
<div class="t" style="left:0.00px;top:1077.03px;font:20.0px 'Liberation Mono';line-height:30px;color:#237893;width:62.5px;text-align:right;letter-spacing:-0.516px">147</div>
<div class="t" style="left:105.00px;top:1077.03px;font:20.0px 'Liberation Mono';line-height:30px;color:#001080;letter-spacing:-0.516px"><span class="pl">        </span><span class="kw">return</span><span class="pl"> </span><span class="nu">3</span><span class="pl"> </span><span class="star"><svg width="12" height="12" viewBox="0 0 12 12" style="position:absolute;left:0px;top:-10.8px"><g stroke="#000" stroke-width="1.45" stroke-linecap="butt"><path d="M5.9,0.5 L5.9,11.3"/><path d="M1.2,3.2 L10.6,8.6"/><path d="M1.2,8.6 L10.6,3.2"/></g></svg></span><span class="pl"> </span><span class="v">y</span><span class="pl"> </span><span class="op" style="position:relative;top:2px">+</span><span class="pl"> </span><span class="v">x</span></div>
<div class="t" style="left:0.00px;top:1105.68px;font:20.0px 'Liberation Mono';line-height:30px;color:#237893;width:62.5px;text-align:right;letter-spacing:-0.516px">148</div>
<div class="t" style="left:0.00px;top:1134.34px;font:20.0px 'Liberation Mono';line-height:30px;color:#237893;width:62.5px;text-align:right;letter-spacing:-0.516px">149</div>
<div class="t" style="left:105.00px;top:1134.34px;font:20.0px 'Liberation Mono';line-height:30px;color:#001080;letter-spacing:-0.516px"><span class="pl">    </span><span class="fn">@subroutine</span></div>
<div class="t" style="left:0.00px;top:1162.99px;font:20.0px 'Liberation Mono';line-height:30px;color:#237893;width:62.5px;text-align:right;letter-spacing:-0.516px">150</div>
<div class="t" style="left:105.00px;top:1162.99px;font:20.0px 'Liberation Mono';line-height:30px;color:#001080;letter-spacing:-0.516px"><span class="pl">    </span><span class="st">def</span><span class="pl"> </span><span class="fn">is_game_over</span><span class="b0">(</span><span class="v">self</span><span class="pl">, </span><span class="v">board</span><span class="pl">: </span><span class="v">Board</span><span class="b0">)</span><span class="pl"> </span><span class="star"><svg width="12" height="4" viewBox="0 0 12 4" style="position:absolute;left:0px;top:-7.3px"><path d="M1.6,2 L11.2,2" stroke="#000" stroke-width="1.55"/></svg></span><span class="pl">&gt; </span><span class="cl">Tuple</span><span class="b0">[</span><span class="cl">bool</span><span class="pl">, </span><span class="cl">bool</span><span class="b0">]</span><span class="pl">:</span></div>
<div class="t" style="left:0.00px;top:1191.64px;font:20.0px 'Liberation Mono';line-height:30px;color:#237893;width:62.5px;text-align:right;letter-spacing:-0.516px">151</div>
<div class="t" style="left:105.00px;top:1191.64px;font:20.0px 'Liberation Mono';line-height:30px;color:#001080;letter-spacing:-0.516px"><span class="pl">        </span><span class="kw">for</span><span class="pl"> </span><span class="v">i</span><span class="pl"> </span><span class="kw">in</span><span class="pl"> </span><span class="cl">urange</span><span class="b0">(</span><span class="nu">3</span><span class="b0">)</span><span class="pl">:</span></div>
<div class="t" style="left:0.00px;top:1220.30px;font:20.0px 'Liberation Mono';line-height:30px;color:#237893;width:62.5px;text-align:right;letter-spacing:-0.516px">152</div>
<div class="t" style="left:105.00px;top:1220.30px;font:20.0px 'Liberation Mono';line-height:30px;color:#001080;letter-spacing:-0.516px"><span class="pl">            </span><span class="cm"># Row check</span></div>
<div class="t" style="left:0.00px;top:1248.95px;font:20.0px 'Liberation Mono';line-height:30px;color:#237893;width:62.5px;text-align:right;letter-spacing:-0.516px">153</div>
<div class="t" style="left:105.00px;top:1248.95px;font:20.0px 'Liberation Mono';line-height:30px;color:#001080;letter-spacing:-0.516px"><span class="pl">            </span><span class="kw">if</span><span class="pl"> </span><span class="v">board</span><span class="b0">[</span><span class="nu">3</span><span class="pl"> </span><span class="star"><svg width="12" height="12" viewBox="0 0 12 12" style="position:absolute;left:0px;top:-10.8px"><g stroke="#000" stroke-width="1.45" stroke-linecap="butt"><path d="M5.9,0.5 L5.9,11.3"/><path d="M1.2,3.2 L10.6,8.6"/><path d="M1.2,8.6 L10.6,3.2"/></g></svg></span><span class="pl"> </span><span class="v">i</span><span class="b0">]</span><span class="pl"> </span><span class="op">==</span><span class="pl"> </span><span class="v">board</span><span class="b0">[</span><span class="nu">3</span><span class="pl"> </span><span class="star"><svg width="12" height="12" viewBox="0 0 12 12" style="position:absolute;left:0px;top:-10.8px"><g stroke="#000" stroke-width="1.45" stroke-linecap="butt"><path d="M5.9,0.5 L5.9,11.3"/><path d="M1.2,3.2 L10.6,8.6"/><path d="M1.2,8.6 L10.6,3.2"/></g></svg></span><span class="pl"> </span><span class="v">i</span><span class="pl"> </span><span class="op" style="position:relative;top:2px">+</span><span class="pl"> </span><span class="nu">1</span><span class="b0">]</span><span class="pl"> </span><span class="op">==</span><span class="pl"> </span><span class="v">board</span><span class="b0">[</span><span class="nu">3</span><span class="pl"> </span><span class="star"><svg width="12" height="12" viewBox="0 0 12 12" style="position:absolute;left:0px;top:-10.8px"><g stroke="#000" stroke-width="1.45" stroke-linecap="butt"><path d="M5.9,0.5 L5.9,11.3"/><path d="M1.2,3.2 L10.6,8.6"/><path d="M1.2,8.6 L10.6,3.2"/></g></svg></span><span class="pl"> </span><span class="v">i</span><span class="pl"> </span><span class="op" style="position:relative;top:2px">+</span><span class="pl"> </span><span class="nu">2</span><span class="b0">]</span><span class="pl"> </span><span class="op">!=</span><span class="pl"> </span><span class="cl">arc4</span><span class="pl">.</span><span class="cl">Byte</span><span class="b0">()</span><span class="pl">:</span></div>
<div class="t" style="left:0.00px;top:1277.61px;font:20.0px 'Liberation Mono';line-height:30px;color:#0B216F;width:62.5px;text-align:right;letter-spacing:-0.516px">154</div>
<div class="t" style="left:105.00px;top:1277.61px;font:20.0px 'Liberation Mono';line-height:30px;color:#001080;letter-spacing:-0.516px"><span class="pl">                </span><span class="kw">return</span><span class="pl"> </span><span class="st">True</span><span class="pl">, </span><span class="st">False</span></div>
<div class="t" style="left:0.00px;top:1306.26px;font:20.0px 'Liberation Mono';line-height:30px;color:#237893;width:62.5px;text-align:right;letter-spacing:-0.516px">155</div>
<div class="a" style="left:7.899999999999977px;top:254.33px;width:12.8px;height:12.8px;border-radius:50%;background:#e51400"></div>
<div class="a" style="left:7.899999999999977px;top:397.61px;width:12.8px;height:12.8px;border-radius:50%;background:#e51400"></div>
<div class="a" style="left:7.899999999999977px;top:512.23px;width:12.8px;height:12.8px;border-radius:50%;background:#e51400"></div>
<div class="a" style="left:7.899999999999977px;top:540.88px;width:12.8px;height:12.8px;border-radius:50%;background:#e51400"></div>
<div class="a" style="left:7.899999999999977px;top:684.15px;width:12.8px;height:12.8px;border-radius:50%;background:#e51400"></div>
<div class="a" style="left:7.899999999999977px;top:712.81px;width:12.8px;height:12.8px;border-radius:50%;background:#e51400"></div>
<div class="a" style="left:7.899999999999977px;top:741.47px;width:12.8px;height:12.8px;border-radius:50%;background:#e51400"></div>
<div class="a" style="left:7.899999999999977px;top:856.09px;width:12.8px;height:12.8px;border-radius:50%;background:#e51400"></div>
<svg class="a" style="left:5px;top:794.67px;" width="20" height="20" viewBox="0 0 20 20"><path d="M3.6,1.6 L10.8,1.6 L18.2,9.8 L10.8,18.2 L3.6,18.2 Q2.1,18.2 2.1,16.7 L2.1,3.1 Q2.1,1.6 3.6,1.6 Z" fill="none" stroke="#b88914" stroke-width="1.9" stroke-linejoin="round"/></svg>
<div class="a" style="left:495.02px;top:1278.51px;width:2.6px;height:27px;background:#000"></div>
<div class="t" style="left:565.44px;top:1277.61px;font:20.0px 'Liberation Mono';line-height:30px;color:#c9c9c9;letter-spacing:-0.516px">You, 17 seconds ago • Uncommitted changes</div>
<div class="a" style="left:105.0px;top:1305.3px;width:1209.8000000000002px;height:20px;background:#c1c1c1;border-top:1px solid #b4b4b4"></div>
</div>
<div class="a" style="left:882px;top:146.6px;width:1392px;height:6px;background:linear-gradient(rgba(0,0,0,0.14),rgba(0,0,0,0))"></div>
<div class="a" style="left:882px;top:89px;width:1392px;height:57.6px;background:#fff"></div>
<div class="t" style="left:882.00px;top:91.50px;font:20.0px 'Liberation Mono';line-height:30px;color:#237893;width:62.5px;text-align:right;letter-spacing:-0.516px">33</div>
<div class="t" style="left:987.00px;top:90.20px;font:20.0px 'Liberation Mono';line-height:30px;color:#001080;letter-spacing:-0.516px"><span class="st">class</span><span class="pl"> </span><span class="cl">TicTacToe</span><span class="b0">(</span><span class="cl">ARC4Contract</span><span class="b0">)</span><span class="pl">:</span></div>
<div class="t" style="left:882.00px;top:120.00px;font:20.0px 'Liberation Mono';line-height:30px;color:#237893;width:62.5px;text-align:right;letter-spacing:-0.516px">106</div>
<div class="t" style="left:987.00px;top:118.80px;font:20.0px 'Liberation Mono';line-height:30px;color:#001080;letter-spacing:-0.516px"><span class="pl">    </span><span class="st">def</span><span class="pl"> </span><span class="fn">move</span><span class="b0">(</span><span class="v">self</span><span class="pl">, </span><span class="v">game_id</span><span class="pl">: </span><span class="cl">UInt64</span><span class="pl">, </span><span class="v">x</span><span class="pl">: </span><span class="cl">UInt64</span><span class="pl">, </span><span class="v">y</span><span class="pl">: </span><span class="cl">UInt64</span><span class="b0">)</span><span class="pl"> </span><span class="star"><svg width="12" height="4" viewBox="0 0 12 4" style="position:absolute;left:0px;top:-7.3px"><path d="M1.6,2 L11.2,2" stroke="#000" stroke-width="1.55"/></svg></span><span class="pl">&gt; </span><span class="st">None</span><span class="pl">:</span></div>
<div class="a" style="left:981.7px;top:55.6px;width:368.2px;height:43.4px;border-radius:7px;background:#f3f3f3;box-shadow:0 0.5px 4px rgba(0,0,0,0.30)"></div>
<div class="a" style="left:1001.0px;top:69.0px;width:3.2px;height:3.2px;background:#9c9c9c"></div>
<div class="a" style="left:1001.0px;top:75.0px;width:3.2px;height:3.2px;background:#9c9c9c"></div>
<div class="a" style="left:1001.0px;top:81.0px;width:3.2px;height:3.2px;background:#9c9c9c"></div>
<div class="a" style="left:1008.0px;top:69.0px;width:3.2px;height:3.2px;background:#9c9c9c"></div>
<div class="a" style="left:1008.0px;top:75.0px;width:3.2px;height:3.2px;background:#9c9c9c"></div>
<div class="a" style="left:1008.0px;top:81.0px;width:3.2px;height:3.2px;background:#9c9c9c"></div>
<svg class="a" style="left:1026px;top:66px;" width="22" height="22" viewBox="0 0 22 22"><path d="M2.6,1.4 L2.6,20.2" stroke="#007acc" stroke-width="1.9"/><path d="M7.6,3.2 L19.4,11 L7.6,18.8 Z" fill="none" stroke="#007acc" stroke-width="1.9" stroke-linejoin="round"/></svg>
<svg class="a" style="left:1066px;top:65px;" width="24" height="23" viewBox="0 0 24 23"><path d="M2.6,12.2 A9,9 0 0 1 19.6,7.6" fill="none" stroke="#007acc" stroke-width="1.9"/><path d="M20.2,1.6 L20.2,8.8 L13,8.8" fill="none" stroke="#007acc" stroke-width="1.9"/><circle cx="11.2" cy="18.6" r="2.7" fill="#007acc"/></svg>
<svg class="a" style="left:1111px;top:65px;" width="17" height="23" viewBox="0 0 17 23"><path d="M8.5,1 L8.5,12.6 M3,7.6 L8.5,13 L14,7.6" fill="none" stroke="#007acc" stroke-width="1.9"/><circle cx="8.5" cy="19.2" r="2.7" fill="#007acc"/></svg>
<svg class="a" style="left:1152px;top:65px;" width="17" height="23" viewBox="0 0 17 23"><path d="M8.5,13.6 L8.5,2 M3,7.4 L8.5,2 L14,7.4" fill="none" stroke="#007acc" stroke-width="1.9"/><circle cx="8.5" cy="19.2" r="2.7" fill="#007acc"/></svg>
<svg class="a" style="left:1191px;top:65px;" width="23" height="23" viewBox="0 0 23 23"><path d="M20.4,12.2 A9,9 0 0 0 3.4,7.6" fill="none" stroke="#007acc" stroke-width="1.9"/><path d="M2.8,1.6 L2.8,8.8 L10,8.8" fill="none" stroke="#007acc" stroke-width="1.9"/><circle cx="11.8" cy="18.6" r="2.7" fill="#007acc"/></svg>
<svg class="a" style="left:1231px;top:66px;" width="23" height="22" viewBox="0 0 23 22"><path d="M19.4,1.4 L19.4,20.2" stroke="#007acc" stroke-width="1.9"/><path d="M14.4,3.2 L2.6,11 L14.4,18.8 Z" fill="none" stroke="#007acc" stroke-width="1.9" stroke-linejoin="round"/></svg>
<svg class="a" style="left:1274px;top:66px;" width="22" height="21" viewBox="0 0 22 21"><path d="M4.6,6.2 A8.2,8.2 0 1 1 3.4,12.4" fill="none" stroke="#388a34" stroke-width="2"/><path d="M2.8,1.6 L2.8,7.6 L8.8,7.6" fill="none" stroke="#388a34" stroke-width="2"/></svg>
<svg class="a" style="left:1315px;top:67px;" width="22" height="20" viewBox="0 0 22 20"><rect x="2.6" y="1.4" width="16.6" height="16.8" rx="1.4" fill="none" stroke="#9c1c12" stroke-width="1.9"/></svg>
</body></html>
